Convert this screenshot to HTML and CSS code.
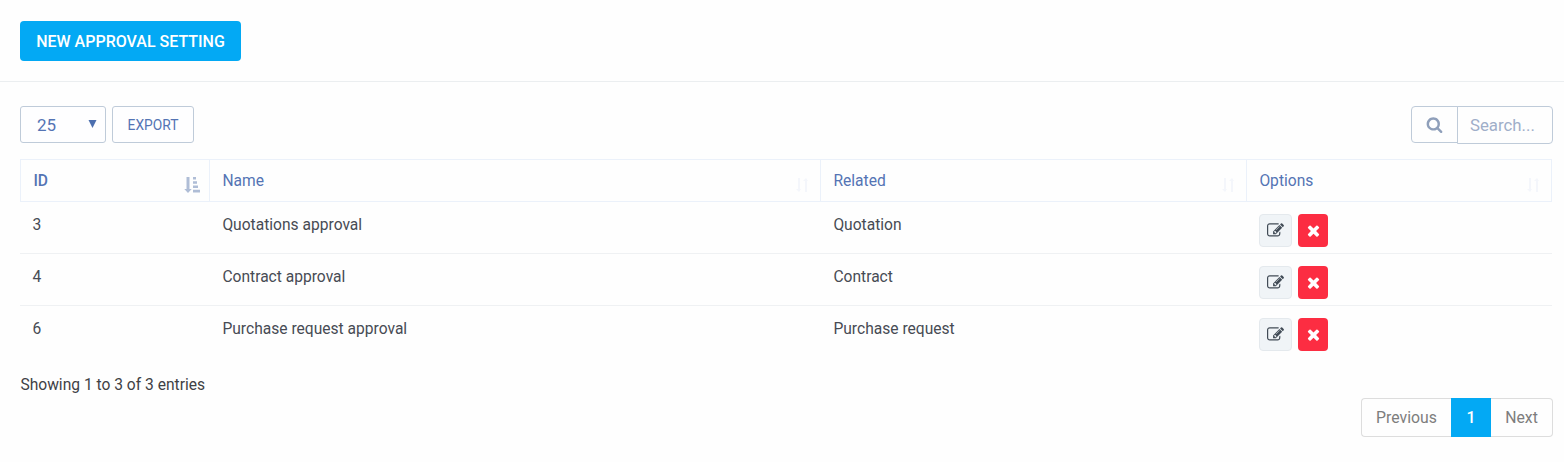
FILE: index.html
```html
<!DOCTYPE html>
<html lang="en">
<head>
<meta charset="utf-8">
<title>Approval settings</title>
<link rel="stylesheet" href="styles.css">
</head>
<body>
<svg class="defs" width="0" height="0" aria-hidden="true">
  <symbol id="search" viewBox="0 0 1792 1792"><path d="M1216 832q0-185-131.5-316.5t-316.5-131.5-316.5 131.5-131.5 316.5 131.5 316.5 316.5 131.5 316.5-131.5 131.5-316.5zm512 832q0 52-38 90t-90 38q-54 0-90-38l-343-342q-179 124-399 124-143 0-273.5-55.5t-225-150-150-225-55.5-273.5 55.5-273.5 150-225 225-150 273.5-55.5 273.5 55.5 225 150 150 225 55.5 273.5q0 220-124 399l343 343q37 37 37 90z"/></symbol>
  <symbol id="edit" viewBox="0 0 1792 1792"><path d="M888 1184l116-116-152-152-116 116v56h96v96h56zm440-720q-16-16-33 1l-350 350q-17 17-1 33t33-1l350-350q17-17 1-33zm80 594v190q0 119-84.5 203.5t-203.5 84.5h-832q-119 0-203.5-84.5t-84.5-203.5v-832q0-119 84.5-203.5t203.5-84.5h832q63 0 117 25 15 7 18 23 3 17-9 29l-49 49q-14 14-32 8-23-6-45-6h-832q-66 0-113 47t-47 113v832q0 66 47 113t113 47h832q66 0 113-47t47-113v-126q0-13 9-22l64-64q15-15 35-7t20 29zm-96-738l288 288-672 672h-288v-288zm444 132l-92 92-288-288 92-92q28-28 68-28t68 28l152 152q28 28 28 68t-28 68z"/></symbol>
  <symbol id="remove" viewBox="0 0 1792 1792"><path d="M1490 1322q0 40-28 68l-136 136q-28 28-68 28t-68-28l-294-294-294 294q-28 28-68 28t-68-28l-136-136q-28-28-28-68t28-68l294-294-294-294q-28-28-28-68t28-68l136-136q28-28 68-28t68 28l294 294 294-294q28-28 68-28t68 28l136 136q28 28 28 68t-28 68l-294 294 294 294q28 28 28 68z"/></symbol>
  <symbol id="sort-asc" viewBox="0 0 16 16"><path d="M2.500 0h3v12h2.200L4 16 .3 12h2.200zM9 0h3v2.500H9zM9 4.300h4v2.500H9zM9 8.600h5v2.500H9zM9 12.800h7v2.700H9z"/></symbol>
  <symbol id="sort" viewBox="0 0 14 16"><path d="M3 1h2v11h1l-2 3-3-3h2zM10 15h2V4h1l-2-3-3 3h2z"/></symbol>
</svg>
<header class="top"><button class="btn-new">NEW APPROVAL SETTING</button></header>
<main class="content">
  <div class="toolbar">
    <div class="length"><span>25</span><svg class="caret" viewBox="0 0 8 8"><path d="M0 0h8L4 8z"/></svg></div>
    <button class="export">EXPORT</button>
    <div class="search"><span class="search-icon"><svg><use href="#search"/></svg></span><div class="search-field">Search...</div></div>
  </div>
  <div class="table">
    <div class="row head">
      <div class="sorted">ID<svg class="asc"><use href="#sort-asc"/></svg></div>
      <div>Name<svg class="both"><use href="#sort"/></svg></div>
      <div>Related<svg class="both"><use href="#sort"/></svg></div>
      <div>Options<svg class="both"><use href="#sort"/></svg></div>
    </div>
    <div class="row"><div>3</div><div>Quotations approval</div><div>Quotation</div><div class="options"><button class="edit"><svg><use href="#edit"/></svg></button><button class="remove"><svg><use href="#remove"/></svg></button></div></div>
    <div class="row"><div>4</div><div>Contract approval</div><div>Contract</div><div class="options"><button class="edit"><svg><use href="#edit"/></svg></button><button class="remove"><svg><use href="#remove"/></svg></button></div></div>
    <div class="row"><div>6</div><div>Purchase request approval</div><div>Purchase request</div><div class="options"><button class="edit"><svg><use href="#edit"/></svg></button><button class="remove"><svg><use href="#remove"/></svg></button></div></div>
  </div>
  <div class="info">Showing 1 to 3 of 3 entries</div>
  <nav class="pager"><span class="prev">Previous</span><span class="current">1</span><span class="next">Next</span></nav>
</main>
</body>
</html>
```
FILE: styles.css
```css
* { box-sizing: border-box; }
body { margin: 0; background: #fefefe; font: 15.6px/22px Roboto, sans-serif; color: #474b54; }
svg { display: block; fill: currentColor; }
.defs { position: absolute; }
button { font-family: inherit; padding: 0; margin: 0; }
.top { height: 82px; padding: 21px 20px 0; border-bottom: 1px solid #ebeef0; }
.btn-new { display: block; width: 221px; height: 40px; padding-top: 1px; border: 0; border-radius: 4px; background: #03a9f4; color: #fff; font-size: 16px; font-weight: 500; white-space: nowrap; }
.content { padding: 24px 11px 0 20px; }
.toolbar { display: flex; height: 38px; align-items: flex-start; }
.length, .export { height: 37px; border: 1px solid #bfcbd9; border-radius: 3px; background: #fefeff; color: #5474b4; }
.length { display: flex; width: 86px; padding: 7px 8px 0 16px; justify-content: space-between; font-size: 17px; }
.caret { width: 9px; height: 8px; margin-top: 6px; color: #4c6faf; }
.export { width: 82px; margin-left: 6px; font-size: 13.8px; }
.search { display: flex; margin-left: auto; }
.search-icon { display: flex; width: 47px; height: 37px; border: 1px solid #bfcbd9; border-radius: 4px 0 0 4px; align-items: center; justify-content: center; color: #8f9fba; }
.search-icon svg { width: 17px; height: 17px; }
.search-field { width: 96px; height: 38px; margin-left: -1px; padding: 7px 12px 0; border: 1px solid #bfcbd9; border-radius: 0 4px 4px 0; font-size: 16.8px; color: #a0aec9; }
.table { width: 1532px; margin-top: 15px; }
.row { display: grid; grid-template-columns: 190px 611px 426px 305px; height: 52px; border-bottom: 1px solid #eff1f3; }
.row > div { padding: 12px 12px 0 12.4px; }
.row:last-child { border-bottom: 0; }
.row .options { display: flex; gap: 6px; padding-left: 12px; }
.row.head { height: 43px; border: 1px solid #ebf1fa; grid-template-columns: 189px 611px 426px 304px; color: #5474b4; }
.head > div { display: flex; justify-content: space-between; padding-top: 10px; border-right: 1px solid #ebf1fa; }
.head > div:last-child { border-right: 0; }
.row.head .sorted { padding-right: 9px; font-weight: 500; }
.asc { width: 16px; height: 16px; margin-top: 7px; color: #afbdd6; }
.both { width: 14px; height: 16px; margin-top: 7px; margin-right: -1px; color: #f4f6fb; }
.edit, .remove { display: flex; height: 33px; align-items: center; justify-content: center; border-radius: 4px; }
.edit { width: 33px; border: 1px solid #e4e9ed; background: #f0f4f7; color: #414b56; }
.remove { width: 30px; border: 0; background: #fc2d42; color: #fff; }
.edit svg, .remove svg { width: 17px; height: 17px; }
.edit svg { margin-right: 1px; }
.remove svg { margin-bottom: 1px; }
.info { margin-top: 16px; padding-left: .4px; color: #3f4145; }
.pager { display: flex; height: 39px; margin-top: 2px; justify-content: flex-end; color: #7d7d7d; font-size: 15.8px; }
.pager span { display: flex; align-items: center; justify-content: center; border: 1px solid #ddd; }
.pager .prev { width: 90px; border-right: 0; border-radius: 4px 0 0 4px; }
.pager .current { width: 40px; border-color: #03a9f4; background: #03a9f4; color: #fff; font-weight: 500; }
.pager .next { width: 62px; border-left: 0; border-radius: 0 4px 4px 0; }
```
